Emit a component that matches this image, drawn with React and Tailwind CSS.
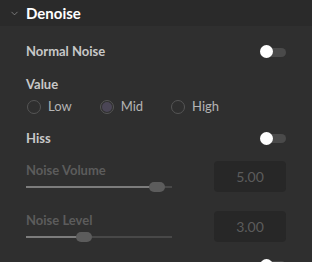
import { ChevronDown } from 'lucide-react';

const font = { fontFamily: 'Lato, "Open Sans", "Noto Sans", sans-serif' };

function Toggle() {
  return (
    <div className="relative w-[26px] h-[14px] flex items-center">
      <div className="w-full h-[9px] rounded-full bg-[#4a4a4a]" />
      <div className="absolute left-0 top-0 w-[13px] h-[13px] rounded-full bg-white" />
    </div>
  );
}

function Radio({ label, checked }) {
  return (
    <div className="flex items-center gap-[7px]">
      <div className="w-[14px] h-[14px] rounded-full border border-[#555] flex items-center justify-center">
        {checked && <div className="w-[10px] h-[10px] rounded-full bg-[#4b4656]" />}
      </div>
      <span className="text-[13px] text-[#b4b4b4]">{label}</span>
    </div>
  );
}

function SliderRow({ label, value, pct, className }) {
  return (
    <div className={`flex items-center gap-[42px] ${className}`}>
      <div className="w-[146px] pt-[2px]">
        <div className="text-[13px] font-bold text-[#5c5c5c] leading-[16px]">{label}</div>
        <div className="relative h-[12px] mt-[3px] flex items-center">
          <div className="h-[2px] w-full bg-[#484848]" />
          <div className="absolute left-0 h-[2px] bg-[#7c7c7c]" style={{ width: `${pct}%` }} />
          <div
            className="absolute w-[16px] h-[10px] rounded-full bg-[#5c5c5c]"
            style={{ left: `calc(${pct}% - 8px)` }}
          />
        </div>
      </div>
      <div className="w-[72px] h-[31px] rounded-[4px] bg-[#272727] flex items-center justify-center text-[14px] text-[#5c5c5c]">
        {value}
      </div>
    </div>
  );
}

export default function App() {
  return (
    <div className="w-[312px] h-[262px] bg-[#2f2f2f] overflow-hidden" style={font}>
      <div className="h-[26px] bg-[#2a2a2a] flex items-center pl-[9px] gap-[6px]">
        <ChevronDown size={11} strokeWidth={1.5} className="text-[#9a9a9a]" />
        <span className="text-[15px] font-bold text-white">Denoise</span>
      </div>
      <div className="pl-[26px] pr-[26px]">
        <div className="flex items-center justify-between mt-[18px] h-[16px]">
          <span className="text-[13px] font-bold text-[#c8c8c8]">Normal Noise</span>
          <Toggle />
        </div>
        <div className="text-[13px] font-bold text-[#c8c8c8] mt-[16px] leading-[16px]">Value</div>
        <div className="flex items-center gap-[28px] mt-[5px] pl-[1px]">
          <Radio label="Low" />
          <Radio label="Mid" checked />
          <Radio label="High" />
        </div>
        <div className="flex items-center justify-between mt-[14px] h-[16px]">
          <span className="text-[13px] font-bold text-[#c8c8c8]">Hiss</span>
          <Toggle />
        </div>
        <div className="mt-[13px]">
          <SliderRow label="Noise Volume" value="5.00" pct={90} className="mt-[6px]" />
          <SliderRow label="Noise Level" value="3.00" pct={40} className="mt-[17px]" />
        </div>
        <div className="flex justify-end mt-[16px]">
          <Toggle />
        </div>
      </div>
    </div>
  );
}
